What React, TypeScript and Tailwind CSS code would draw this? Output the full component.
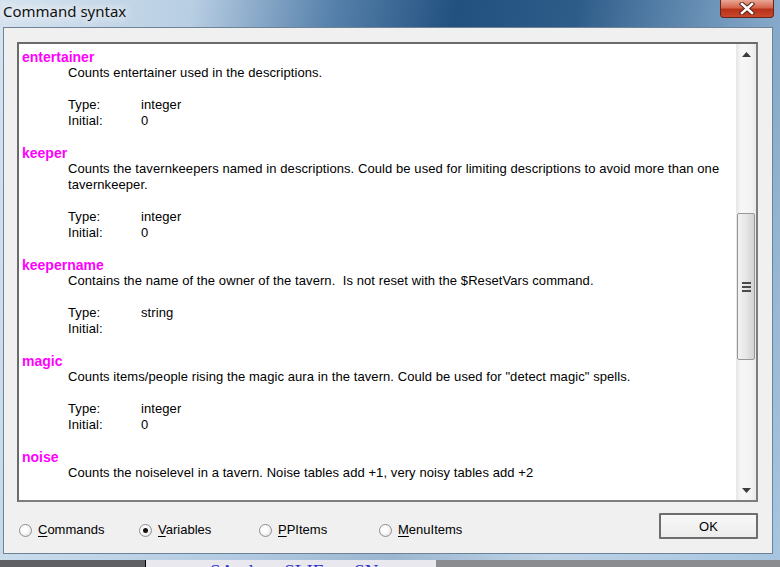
import React from 'react';

type Entry = { name: string; desc: string[]; type: string; initial: string };

const entries: Entry[] = [
  { name: 'entertainer', desc: ['Counts entertainer used in the descriptions.'], type: 'integer', initial: '0' },
  {
    name: 'keeper',
    desc: [
      'Counts the tavernkeepers named in descriptions. Could be used for limiting descriptions to avoid more than one',
      'tavernkeeper.',
    ],
    type: 'integer',
    initial: '0',
  },
  {
    name: 'keepername',
    desc: ['Contains the name of the owner of the tavern.  Is not reset with the $ResetVars command.'],
    type: 'string',
    initial: '',
  },
  {
    name: 'magic',
    desc: ['Counts items/people rising the magic aura in the tavern. Could be used for "detect magic" spells.'],
    type: 'integer',
    initial: '0',
  },
  {
    name: 'noise',
    desc: ['Counts the noiselevel in a tavern. Noise tables add +1, very noisy tables add +2'],
    type: 'integer',
    initial: '0',
  },
];

const Radio = ({ hot, rest, checked }: { hot: string; rest: string; checked?: boolean }) => (
  <div className="flex items-center w-[120px]">
    <span className="w-[13px] h-[13px] rounded-full border border-[#8e8f8f] bg-[radial-gradient(circle_at_40%_40%,#ffffff_30%,#d8d8d8)] flex items-center justify-center">
      {checked && <span className="w-[5px] h-[5px] rounded-full bg-[#111]" />}
    </span>
    <span className="ml-[6px] leading-4">
      <span className="underline underline-offset-2">{hot}</span>
      {rest}
    </span>
  </div>
);

const Triangle = ({ up }: { up?: boolean }) => (
  <svg width="9" height="5" viewBox="0 0 9 5">
    <path d={up ? 'M0 5 L4.5 0 L9 5 Z' : 'M0 0 L4.5 5 L9 0 Z'} fill="#3c3c3c" />
  </svg>
);

const Scrollbar = () => (
  <div className="w-[20px] h-full flex flex-col items-center bg-[linear-gradient(to_right,#e6e6e6,#f7f7f7_25%,#f3f3f3_75%,#e9e9e9)]">
    <div className="h-[17px] flex items-center justify-center pt-[4px]">
      <Triangle up />
    </div>
    <div className="h-[152px]" />
    <div className="w-[18px] h-[147px] rounded-[2px] border border-[#979797] bg-[linear-gradient(to_right,#f3f3f3,#e6e6e6_50%,#d2d2d2)] flex flex-col items-center justify-center gap-[2px]">
      <span className="w-[9px] h-[2px] bg-[#4a4a4a]" />
      <span className="w-[9px] h-[2px] bg-[#4a4a4a]" />
      <span className="w-[9px] h-[2px] bg-[#4a4a4a]" />
    </div>
    <div className="flex-1" />
    <div className="h-[17px] flex items-center justify-center pb-[2px]">
      <Triangle />
    </div>
  </div>
);

export default function App() {
  return (
    <div className="w-[780px] h-[567px] overflow-hidden flex flex-col bg-[linear-gradient(100deg,#d6e3ef_0%,#b8cee3_22%,#5681ab_38%,#22507f_52%,#2f5d8a_66%,#7097bb_82%,#aac7e1_100%)] font-['Liberation_Sans',Arial,sans-serif] text-[13px] text-black">
      {/* title bar */}
      <div className="h-[27px] flex items-start justify-between">
        <div className="pl-[3px] pt-[1px] font-['Noto_Sans',sans-serif] text-[15px] leading-[20px] text-[#111] [text-shadow:0_0_8px_#fff,0_0_12px_#fff]">
          Command syntax
        </div>
        <div className="mr-[6px] w-[54px] h-[18px] rounded-b-[4px] border border-t-0 border-[#6b2419] bg-[linear-gradient(#e9a796,#d6654c_45%,#b8321a_55%,#c9482c)] flex items-center justify-center">
          <svg width="16" height="13" viewBox="0 0 16 13">
            <path d="M3 2 L13 11 M13 2 L3 11" stroke="#5a1d12" strokeWidth="4.5" strokeLinecap="square" />
            <path d="M3 2 L13 11 M13 2 L3 11" stroke="#ffffff" strokeWidth="2.6" strokeLinecap="square" />
          </svg>
        </div>
      </div>

      {/* frame + client */}
      <div className="flex h-[527px]">
        <div className="w-[3px]" />
        <div className="w-[770px] h-full border border-[#6f8398] bg-[#f0f0f0] pl-[13px] pt-[14px]">
          <div className="w-[741px] h-[460px] border-2 border-t-[#6b6b6b] border-l-[#6b6b6b] border-b-[#7d7d7d] border-r-[#7d7d7d] bg-white flex">
            <div className="flex-1 overflow-hidden pl-[3px] pt-[5px] leading-4 whitespace-pre tracking-[0.08px]">
              {entries.map((e) => (
                <div key={e.name} className="mb-4">
                  <div className="font-bold text-[14px] text-[#ff00ff] h-4 leading-4 tracking-normal">{e.name}</div>
                  <div className="pl-[46px]">
                    {e.desc.map((d) => (
                      <div key={d} className="h-4">{d}</div>
                    ))}
                    <div className="h-4" />
                    <div className="flex h-4">
                      <span className="w-[73px]">Type:</span>
                      <span>{e.type}</span>
                    </div>
                    <div className="flex h-4">
                      <span className="w-[73px]">Initial:</span>
                      <span>{e.initial}</span>
                    </div>
                  </div>
                </div>
              ))}
            </div>
            <Scrollbar />
          </div>

          <div className="flex justify-between w-[741px]">
            <div className="flex pl-[2px] pt-[19px]">
              <Radio hot="C" rest="ommands" />
              <Radio hot="V" rest="ariables" checked />
              <Radio hot="P" rest="PItems" />
              <Radio hot="M" rest="enuItems" />
            </div>
            <button className="mt-[11px] w-[99px] h-[26px] border-2 border-[#6e6e6e] rounded-[1px] bg-[linear-gradient(#f7f7f7,#ececec)] text-[13px] leading-none">
              OK
            </button>
          </div>
        </div>
        <div className="flex-1" />
      </div>

      {/* bottom glass */}
      <div className="h-[6px] bg-[linear-gradient(to_right,#c9dcec,#b2cbe2_30%,#9bb6cf_50%,#bcd2e6_70%,#a7c5e0)]" />

      {/* content of the window behind */}
      <div className="h-[7px] flex overflow-hidden">
        <div className="w-[145px] bg-[#5e6064]" />
        <div className="w-px bg-black" />
        <div className="w-[290px] bg-[#e8e8ee] pl-[64px] pt-[1px] font-['Liberation_Serif',serif] text-[19px] leading-[22px] text-[#2b32c9] whitespace-pre">
          SAnd<span className="text-[#d02020]">{'<>'}</span>  SLIF<span className="text-[#d02020]">{'<>'}</span>  SNot<span className="text-[#d02020]">{'<>'}</span>
        </div>
        <div className="flex-1 bg-[#8a8c90]" />
      </div>
    </div>
  );
}
